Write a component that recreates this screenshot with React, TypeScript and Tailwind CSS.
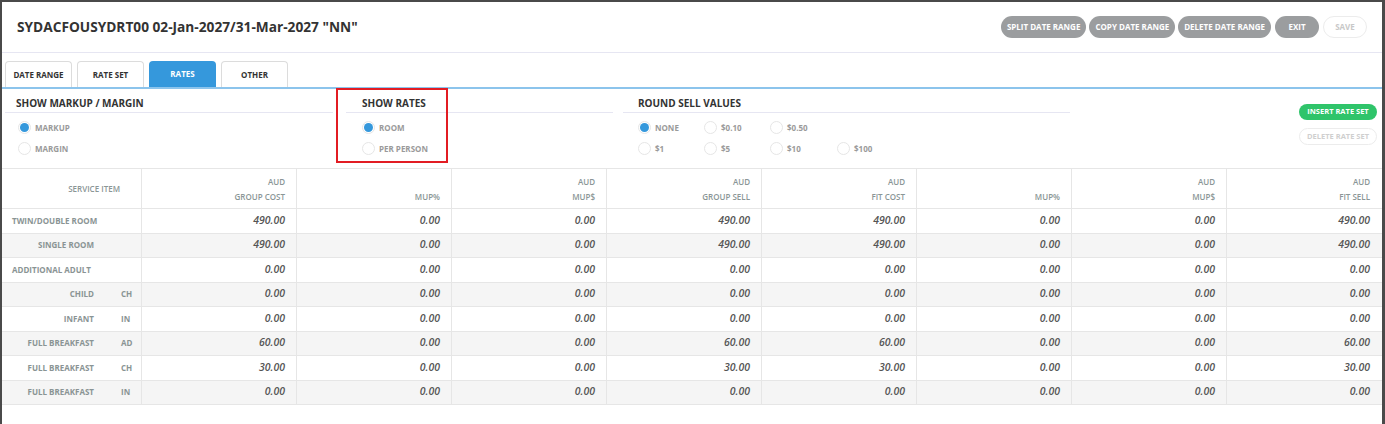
import React from "react";

const font = { fontFamily: '"Open Sans", "Liberation Sans", sans-serif' };

function Radio({ checked, label }: { checked?: boolean; label: string }) {
  return (
    <div className="flex items-center gap-[4px]">
      <span className="w-[13px] h-[13px] rounded-full border border-[#e6e6e6] bg-white flex items-center justify-center">
        {checked && <span className="w-[9px] h-[9px] rounded-full bg-[#3598dc]" />}
      </span>
      <span className="text-[8px] font-bold text-[#9a9a9a] leading-none">{label}</span>
    </div>
  );
}

type Row = { label: string; code?: string; left?: boolean; vals: string[] };

const rows: Row[] = [
  { label: "TWIN/DOUBLE ROOM", left: true, vals: ["490.00", "0.00", "0.00", "490.00", "490.00", "0.00", "0.00", "490.00"] },
  { label: "SINGLE ROOM", vals: ["490.00", "0.00", "0.00", "490.00", "490.00", "0.00", "0.00", "490.00"] },
  { label: "ADDITIONAL ADULT", left: true, vals: ["0.00", "0.00", "0.00", "0.00", "0.00", "0.00", "0.00", "0.00"] },
  { label: "CHILD", code: "CH", vals: ["0.00", "0.00", "0.00", "0.00", "0.00", "0.00", "0.00", "0.00"] },
  { label: "INFANT", code: "IN", vals: ["0.00", "0.00", "0.00", "0.00", "0.00", "0.00", "0.00", "0.00"] },
  { label: "FULL BREAKFAST", code: "AD", vals: ["60.00", "0.00", "0.00", "60.00", "60.00", "0.00", "0.00", "60.00"] },
  { label: "FULL BREAKFAST", code: "CH", vals: ["30.00", "0.00", "0.00", "30.00", "30.00", "0.00", "0.00", "30.00"] },
  { label: "FULL BREAKFAST", code: "IN", vals: ["0.00", "0.00", "0.00", "0.00", "0.00", "0.00", "0.00", "0.00"] },
];

const headers: [string, string][] = [
  ["AUD", "GROUP COST"],
  ["", "MUP%"],
  ["AUD", "MUP$"],
  ["AUD", "GROUP SELL"],
  ["AUD", "FIT COST"],
  ["", "MUP%"],
  ["AUD", "MUP$"],
  ["AUD", "FIT SELL"],
];

export default function App() {
  return (
    <div className="w-[1385px] h-[424px] overflow-hidden bg-[#4a4a4a] flex items-start" style={font}>
      <div className="mt-[2px] ml-[2px] w-[1380px] h-[440px] shrink-0 bg-white relative flex flex-col">
        {/* header */}
        <div className="h-[51px] shrink-0 flex items-center justify-between pl-[15px] pr-[15px] border-b border-[#e6e6f2]">
          <div className="text-[13.7px] font-bold text-[#333]">SYDACFOUSYDRT00 02-Jan-2027/31-Mar-2027 "NN"</div>
          <div className="flex items-center gap-[3px]">
            {["SPLIT DATE RANGE", "COPY DATE RANGE", "DELETE DATE RANGE"].map((t) => (
              <div key={t} className="h-[22px] px-[6px] rounded-full bg-[#9b9d9f] text-white text-[8px] font-bold flex items-center">{t}</div>
            ))}
            <div className="h-[22px] w-[44px] rounded-full bg-[#9b9d9f] text-white text-[8px] font-bold flex items-center justify-center ml-[1px]">EXIT</div>
            <div className="h-[22px] w-[44px] rounded-full bg-white border border-[#ececec] text-[#c8c8c8] text-[8px] font-bold flex items-center justify-center ml-[1px]">SAVE</div>
          </div>
        </div>
        {/* tabs */}
        <div className="h-[36px] shrink-0 flex items-end pl-[3px] gap-[5px] border-b-2 border-[#8cc4ec]">
          {["DATE RANGE", "RATE SET", "RATES", "OTHER"].map((t) => (
            <div
              key={t}
              className={
                t === "RATES"
                  ? "w-[67px] h-[26px] rounded-t-[4px] bg-[#3598dc] text-white text-[8px] font-bold flex items-center justify-center"
                  : "w-[67px] h-[26px] rounded-t-[4px] border border-b-0 border-[#dcdcdc] bg-white text-[#333] text-[8px] font-bold flex items-center justify-center"
              }
            >
              {t}
            </div>
          ))}
        </div>
        {/* options */}
        <div className="h-[79px] shrink-0 flex relative">
          <div className="w-[328px] ml-[3px] pt-[7px]">
            <div className="text-[10px] font-bold text-[#333] pl-[11px] leading-[14px] pb-[2px] border-b border-[#e6e6f2]">SHOW MARKUP / MARGIN</div>
            <div className="flex flex-col gap-[8px] pl-[13px] pt-[8px]">
              <Radio checked label="MARKUP" />
              <Radio label="MARGIN" />
            </div>
          </div>
          <div className="w-[267px] ml-[13px] pt-[7px]">
            <div className="text-[10px] font-bold text-[#333] pl-[16px] leading-[14px] pb-[2px] border-b border-[#e6e6f2]">SHOW RATES</div>
            <div className="flex flex-col gap-[8px] pl-[16px] pt-[8px]">
              <Radio checked label="ROOM" />
              <Radio label="PER PERSON" />
            </div>
          </div>
          <div className="w-[447px] ml-[10px] pt-[7px]">
            <div className="text-[10px] font-bold text-[#333] pl-[15px] leading-[14px] pb-[2px] border-b border-[#e6e6f2]">ROUND SELL VALUES</div>
            <div className="grid grid-cols-[66px_66px_67px_66px] gap-y-[8px] pl-[15px] pt-[8px]">
              <Radio checked label="NONE" />
              <Radio label="$0.10" />
              <Radio label="$0.50" />
              <span />
              <Radio label="$1" />
              <Radio label="$5" />
              <Radio label="$10" />
              <Radio label="$100" />
            </div>
          </div>
          <div className="flex-1 flex flex-col items-end pr-[5px] pt-[15px] gap-[8px]">
            <div className="w-[78px] h-[16px] rounded-full bg-[#2fc46a] text-white text-[7.5px] font-bold flex items-center justify-center">INSERT RATE SET</div>
            <div className="w-[78px] h-[17px] rounded-full bg-white border border-[#ececec] text-[#cfcfcf] text-[7.5px] font-bold flex items-center justify-center">DELETE RATE SET</div>
          </div>
          {/* annotation box */}
          <div className="absolute left-[334px] top-[-1px] w-[112px] h-[75px] border-2 border-[#e21c23]" />
        </div>
        {/* table */}
        <div className="border-t border-[#e6e6e6]">
          <div className="grid grid-cols-[139px_repeat(8,155px)] h-[40px] border-b border-[#e6e6e6]">
            <div className="flex items-center">
              <span className="w-[118px] text-right text-[8px] font-semibold text-[#8a9696]">SERVICE ITEM</span>
            </div>
            {headers.map(([a, b], i) => (
              <div key={i} className="border-l border-[#e6e6e6] flex flex-col items-end justify-center pr-[11px] gap-[4px] text-[8px] font-semibold text-[#8a9696] leading-[11px]">
                <span>{a || "\u00a0"}</span>
                <span>{b}</span>
              </div>
            ))}
          </div>
          {rows.map((r, ri) => (
            <div
              key={ri}
              className={
                (ri % 2 === 1 ? "bg-[#f5f5f5] " : "bg-white ") +
                "grid grid-cols-[139px_repeat(8,155px)] h-[24.5px] border-b border-[#e6e6e6]"
              }
            >
              <div className="flex items-center text-[8px] font-bold text-[#8a9494] whitespace-nowrap">
                {r.left ? (
                  <span className="pl-[10px]">{r.label}</span>
                ) : (
                  <>
                    <span className="w-[92px] text-right">{r.label}</span>
                    {r.code && <span className="pl-[27px]">{r.code}</span>}
                  </>
                )}
              </div>
              {r.vals.map((v, vi) => (
                <div key={vi} className="border-l border-[#e6e6e6] flex items-center justify-end pr-[11px] text-[10.5px] italic font-semibold text-[#555]">
                  {v}
                </div>
              ))}
            </div>
          ))}
        </div>
      </div>
    </div>
  );
}
